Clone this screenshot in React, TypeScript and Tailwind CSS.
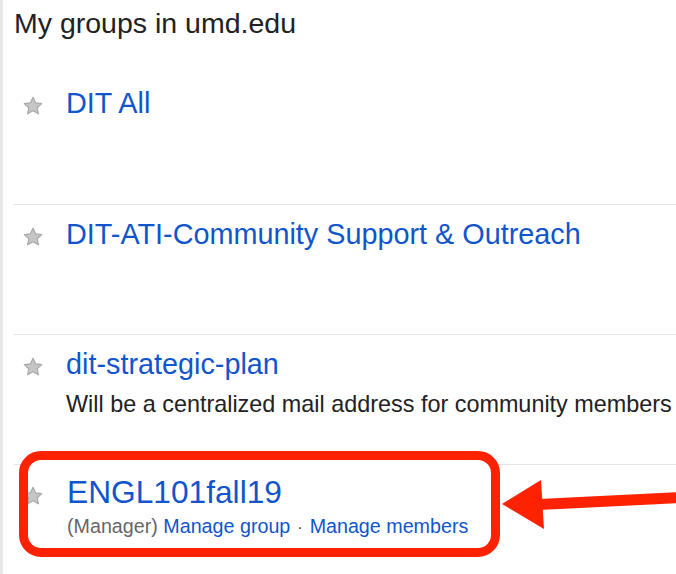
import React from 'react';

const Star = ({ className = '' }: { className?: string }) => (
  <svg viewBox="0 0 24 24" className={`w-[22px] h-[22px] shrink-0 ${className}`}>
    <polygon
      points="12,2.5 14.9,8.6 21.5,9.4 16.6,13.9 17.9,20.5 12,17.2 6.1,20.5 7.4,13.9 2.5,9.4 9.1,8.6"
      fill="#c6c6c6"
      stroke="#a8a8a8"
      strokeWidth="1.3"
      strokeLinejoin="round"
    />
  </svg>
);

const App = () => {
  const groups = [
    { name: 'DIT All', description: '' },
    { name: 'DIT-ATI-Community Support & Outreach', description: '' },
    { name: 'dit-strategic-plan', description: 'Will be a centralized mail address for community members' },
  ];

  return (
    <div className="relative w-[676px] h-[574px] overflow-hidden bg-white border-l-[3px] border-[#e8e8e8] pl-[11px] font-['Liberation_Sans',Arial,sans-serif]">
      <div className="h-[74px] pt-[7px]">
        <h1 className="text-[28.5px] leading-[32px] text-[#222]">My groups in umd.edu</h1>
      </div>

      {groups.map((group, index) => (
        <div
          key={index}
          className={`h-[130px] flex pt-[13px] ${index > 0 ? 'border-t border-[#e5e5e5] pt-[12px]' : ''}`}
        >
          <Star className="ml-[8px] mt-[8px]" />
          <div className="ml-[22px] min-w-0">
            <div className="text-[28.8px] leading-[32px] text-[#1155cc] whitespace-nowrap">{group.name}</div>
            {group.description && (
              <div className="mt-[10px] text-[23.4px] leading-[28px] text-[#222] whitespace-nowrap">
                {group.description}
              </div>
            )}
          </div>
        </div>
      ))}

      {/* highlighted row */}
      <div className="relative h-[110px] flex border-t border-[#e5e5e5] pt-[9px]">
        <div className="absolute left-[5px] top-[-14px] w-[481px] h-[106px] rounded-[22px] bg-white z-10" />
        <Star className="relative z-20 ml-[8px] mt-[11px]" />
        <div className="relative z-20 ml-[23px]">
          <div className="text-[31.7px] leading-[36px] text-[#1155cc] whitespace-nowrap">ENGL101fall19</div>
          <div className="mt-[4px] text-[19.7px] leading-[24px] whitespace-nowrap">
            <span className="text-[#666]">(Manager)</span>{' '}
            <span className="text-[#1155cc]">Manage group</span>
            <span className="mx-[7px] text-[#444] text-[16px]">·</span>
            <span className="text-[#1155cc]">Manage members</span>
          </div>
        </div>
        <div className="absolute left-[5px] top-[-14px] w-[481px] h-[106px] rounded-[22px] border-[9px] border-[#ff2200] z-30" />
      </div>

      <svg className="absolute left-0 top-0 w-[676px] h-[574px] pointer-events-none z-40" viewBox="0 0 676 574">
        <polygon points="499,504 538,480 541,529" fill="#ff2200" />
        <polygon points="536,499 676,492 676,503 536,510" fill="#ff2200" />
      </svg>
    </div>
  );
};

export default App;
